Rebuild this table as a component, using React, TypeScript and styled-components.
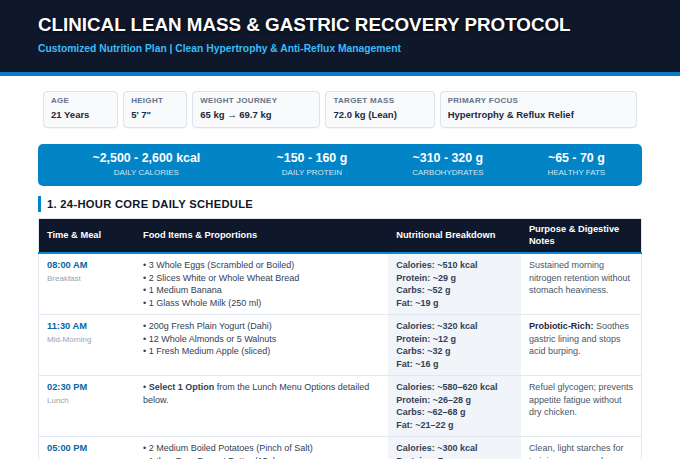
import React from "react";
import styled, { createGlobalStyle } from "styled-components";

const GlobalStyle = createGlobalStyle`
  html, body { margin: 0; padding: 0; background: #ffffff; }
  body {
    font-family: "Liberation Sans", Arial, Helvetica, sans-serif;
    color: #1e293b;
  }
  * { box-sizing: border-box; }
`;

const Header = styled.header`
  background: #0f172a;
  border-bottom: 4px solid #0a7cc9;
  padding: 14px 38px 17px;
`;

const Title = styled.h1`
  margin: 0 0 6px;
  font-size: 18.8px;
  line-height: 22px;
  font-weight: 700;
  color: #ffffff;
  text-transform: uppercase;
  text-shadow: 0 1px 3px rgba(0, 0, 0, 0.7);
`;

const Subtitle = styled.p`
  margin: 0;
  font-size: 10.3px;
  line-height: 13px;
  font-weight: 700;
  color: #38bdf8;
`;

const Main = styled.main`
  padding: 15px 38px 20px;
`;

const InfoRow = styled.div`
  display: grid;
  grid-template-columns: minmax(0, 75fr) minmax(0, 64fr) minmax(0, 128fr) minmax(0, 109fr) minmax(0, 197fr);
  gap: 5px;
  padding: 0 5px;
`;

const InfoCard = styled.div`
  min-width: 0;
  background: #f8fafc;
  border: 1px solid #dde3ea;
  border-radius: 4px;
  padding: 4px 7px 6px;
  box-shadow: 0 1px 1px rgba(15, 23, 42, 0.04);
`;

const InfoLabel = styled.div`
  font-size: 8px;
  line-height: 10px;
  font-weight: 700;
  color: #64748b;
  letter-spacing: 0.3px;
  text-transform: uppercase;
  white-space: nowrap;
`;

const InfoValue = styled.div`
  margin-top: 2px;
  font-size: 9.5px;
  line-height: 13px;
  font-weight: 700;
  color: #1e293b;
  white-space: nowrap;
`;

const MacroBanner = styled.div`
  margin-top: 16px;
  display: flex;
  padding: 7px 8px 8px;
  background: #0284c7;
  border-radius: 5px;
`;

const Macro = styled.div<{ $grow: number }>`
  flex: ${(p) => p.$grow} 1 0;
  min-width: 0;
  text-align: center;
`;

const MacroValue = styled.div`
  font-size: 12.4px;
  line-height: 15px;
  font-weight: 700;
  color: #ffffff;
  white-space: nowrap;
`;

const MacroLabel = styled.div`
  margin-top: 2px;
  font-size: 8px;
  line-height: 10px;
  color: rgba(255, 255, 255, 0.82);
  text-transform: uppercase;
  white-space: nowrap;
`;

const SectionTitle = styled.h2`
  margin: 10px 0 6px;
  padding-left: 6px;
  border-left: 3px solid #0284c7;
  font-size: 11.2px;
  line-height: 16px;
  letter-spacing: 0.3px;
  font-weight: 700;
  color: #0f172a;
  text-transform: uppercase;
`;

const Table = styled.table`
  width: 100%;
  border-collapse: collapse;
  table-layout: fixed;
  border: 1px solid #e2e8f0;
`;

const Th = styled.th<{ $w: string }>`
  width: ${(p) => p.$w};
  background: #0f172a;
  color: #ffffff;
  text-align: left;
  font-size: 9.3px;
  line-height: 11.5px;
  font-weight: 700;
  padding: 5px 8px 5px;
  border-bottom: 2px solid #0a8ad8;
  vertical-align: middle;
`;

const Td = styled.td<{ $shade?: boolean }>`
  padding: 5px 8px 5px;
  vertical-align: top;
  font-size: 9px;
  line-height: 12.5px;
  border-bottom: 1px solid #e2e8f0;
  background: ${(p) => (p.$shade ? "#f1f5f9" : "#ffffff")};
  color: #334155;
`;

const Time = styled.div`
  font-size: 9.3px;
  line-height: 12.5px;
  font-weight: 700;
  color: #0369a1;
`;

const Meal = styled.div`
  margin-top: 1px;
  font-size: 8px;
  line-height: 12px;
  color: #94a3b8;
`;

const Line = styled.div``;

const NutriLine = styled.div`
  font-weight: 700;
  color: #334155;
`;

const Note = styled.div`
  color: #475569;
  strong {
    color: #1e293b;
  }
`;

type Row = {
  time: string;
  meal: string;
  foods: React.ReactNode[];
  nutrition: [string, string][];
  note: React.ReactNode;
};

const rows: Row[] = [
  {
    time: "08:00 AM",
    meal: "Breakfast",
    foods: [
      "3 Whole Eggs (Scrambled or Boiled)",
      "2 Slices White or Whole Wheat Bread",
      "1 Medium Banana",
      "1 Glass Whole Milk (250 ml)",
    ],
    nutrition: [
      ["Calories:", "~510 kcal"],
      ["Protein:", "~29 g"],
      ["Carbs:", "~52 g"],
      ["Fat:", "~19 g"],
    ],
    note: "Sustained morning nitrogen retention without stomach heaviness.",
  },
  {
    time: "11:30 AM",
    meal: "Mid-Morning",
    foods: [
      "200g Fresh Plain Yogurt (Dahi)",
      "12 Whole Almonds or 5 Walnuts",
      "1 Fresh Medium Apple (sliced)",
    ],
    nutrition: [
      ["Calories:", "~320 kcal"],
      ["Protein:", "~12 g"],
      ["Carbs:", "~32 g"],
      ["Fat:", "~16 g"],
    ],
    note: (
      <>
        <strong>Probiotic-Rich:</strong> Soothes gastric lining and stops acid
        burping.
      </>
    ),
  },
  {
    time: "02:30 PM",
    meal: "Lunch",
    foods: [
      <>
        <strong>Select 1 Option</strong> from the Lunch Menu Options detailed
        below.
      </>,
    ],
    nutrition: [
      ["Calories:", "~580–620 kcal"],
      ["Protein:", "~26–28 g"],
      ["Carbs:", "~62–68 g"],
      ["Fat:", "~21–22 g"],
    ],
    note: "Refuel glycogen; prevents appetite fatigue without dry chicken.",
  },
  {
    time: "05:00 PM",
    meal: "Pre-Workout",
    foods: [
      "2 Medium Boiled Potatoes (Pinch of Salt)",
      "1 tbsp Pure Peanut Butter (15g)",
      "1 Cup Green Tea (unsweetened)",
    ],
    nutrition: [
      ["Calories:", "~300 kcal"],
      ["Protein:", "~7 g"],
      ["Carbs:", "~45 g"],
      ["Fat:", "~9 g"],
    ],
    note: "Clean, light starches for training power and easy digestion.",
  },
];

const infos: { label: string; value: string }[] = [
  { label: "Age", value: "21 Years" },
  { label: "Height", value: "5' 7\"" },
  { label: "Weight Journey", value: "65 kg → 69.7 kg" },
  { label: "Target Mass", value: "72.0 kg (Lean)" },
  { label: "Primary Focus", value: "Hypertrophy & Reflux Relief" },
];

const macros: { value: string; label: string; grow: number }[] = [
  { value: "~2,500 - 2,600 kcal", label: "Daily Calories", grow: 200 },
  { value: "~150 - 160 g", label: "Daily Protein", grow: 130 },
  { value: "~310 - 320 g", label: "Carbohydrates", grow: 141 },
  { value: "~65 - 70 g", label: "Healthy Fats", grow: 115 },
];

export default function App() {
  return (
    <>
      <GlobalStyle />
      <Header>
        <Title>Clinical Lean Mass &amp; Gastric Recovery Protocol</Title>
        <Subtitle>
          Customized Nutrition Plan | Clean Hypertrophy &amp; Anti-Reflux
          Management
        </Subtitle>
      </Header>
      <Main>
        <InfoRow>
          {infos.map((i) => (
            <InfoCard key={i.label}>
              <InfoLabel>{i.label}</InfoLabel>
              <InfoValue>{i.value}</InfoValue>
            </InfoCard>
          ))}
        </InfoRow>
        <MacroBanner>
          {macros.map((m) => (
            <Macro key={m.label} $grow={m.grow}>
              <MacroValue>{m.value}</MacroValue>
              <MacroLabel>{m.label}</MacroLabel>
            </Macro>
          ))}
        </MacroBanner>
        <SectionTitle>1. 24-Hour Core Daily Schedule</SectionTitle>
        <Table>
          <thead>
            <tr>
              <Th $w="16%">Time &amp; Meal</Th>
              <Th $w="42%">Food Items &amp; Proportions</Th>
              <Th $w="22%">Nutritional Breakdown</Th>
              <Th $w="20%">Purpose &amp; Digestive Notes</Th>
            </tr>
          </thead>
          <tbody>
            {rows.map((r) => (
              <tr key={r.time}>
                <Td>
                  <Time>{r.time}</Time>
                  <Meal>{r.meal}</Meal>
                </Td>
                <Td>
                  {r.foods.map((f, idx) => (
                    <Line key={idx}>• {f}</Line>
                  ))}
                </Td>
                <Td $shade>
                  {r.nutrition.map(([k, v]) => (
                    <NutriLine key={k}>
                      {k} {v}
                    </NutriLine>
                  ))}
                </Td>
                <Td>
                  <Note>{r.note}</Note>
                </Td>
              </tr>
            ))}
          </tbody>
        </Table>
      </Main>
    </>
  );
}
